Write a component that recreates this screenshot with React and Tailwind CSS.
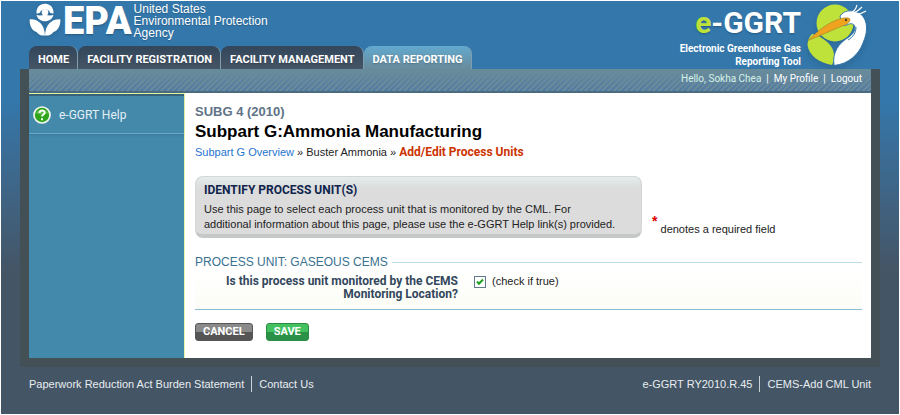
function EpaFlower() {
  return (
    <svg width="32" height="34" viewBox="0 0 32 34" aria-hidden="true" className="shrink-0 drop-shadow-sm">
      <path d="M7.500 10.500C7 4.500 11 .8 16 .8s9 3.700 8.500 9.700c-1.500 0-2.500-.2-3.500-.7-.8-4.700-9.200-4.700-10 0-1 .5-2 .7-3.500.7z" fill="#fff" />
      <circle cx="16" cy="9.300" r="3.300" fill="#fff" />
      <path d="M7.500 12c3 .8 5.500.3 8.500-.3 3 .6 5.500 1.100 8.500.3-1 3.800-4.200 6.300-8.500 6.300S8.500 15.800 7.500 12z" fill="#fff" />
      <path d="M.7 16.200c8.600-.6 15 5.300 15.300 16.300-3.500.5-6-.5-8.500-3.500C2.500 27.500.2 21.500.7 16.200z" fill="#fff" />
      <path d="M31.300 16.200C22.700 15.600 16.300 21.500 16 32.500c3.500.5 6-.5 8.500-3.500 5-1.500 7.300-7.500 6.800-12.800z" fill="#fff" />
      <path d="M9 17.300c4 2 6 5 7 9.500 1-4.500 3-7.500 7-9.500" fill="none" stroke="#3377ab" strokeWidth="1.200" />
    </svg>
  );
}

function HeronLogo() {
  return (
    <svg width="64" height="66" viewBox="0 0 64 66" aria-hidden="true" className="shrink-0 drop-shadow-md">
      <circle cx="30" cy="22" r="18.500" fill="#bfe23b" />
      <path d="M7 33c6 1 13 5 18 11 5 6 5 14 2 20C15 62 4 55 2.500 44c0-4 1.500-8 4.500-11z" fill="#bfe23b" />
      <path d="M29 64.500C27 51 34 42 44 36c4-3 6-6 6-10-1-4-5-4-8-2-3 1-6 0-6-4l-1-5c4-6 11-6 17-4 6 2 10 9 9.500 17 0 5-1.500 9-3.500 14-4 11-14 21-29 22.500z" fill="#fff" stroke="#3377ab" strokeWidth="1" />
      <path d="M51 26c0 6-3 10-8 13" fill="none" stroke="#3377ab" strokeWidth="1" />
      <path d="M3 39.500C13 30 23 21 36 17.500c4-1 8-1 9 .5 0 4-4 6-9 7.500-11 4.500-22 10-33 14z" fill="#efa31f" stroke="#96852d" strokeWidth=".6" />
      <circle cx="41" cy="19" r="1.200" fill="#4d4025" />
      <path d="M45 12c4-1 6-4 7-8M48 12c4-1 7-4 9-6M51 13c4 0 7-1 10-3" fill="none" stroke="#fff" strokeWidth="1.100" />
    </svg>
  );
}

function HelpIcon() {
  return (
    <svg width="18" height="18" viewBox="0 0 18 18" aria-hidden="true">
      <circle cx="9" cy="9" r="8" fill="#2ea51a" stroke="#f1f7ec" strokeWidth="1.700" />
      <path d="M3 7c1-4 11-4 12 0-3 2-9 2-12 0z" fill="#7bcf65" opacity=".6" />
      <path d="M6.500 7c0-3.400 5.200-3.200 5.200-.3C11.700 8.600 9 8.500 9 10.600M9 12.300v1.900" fill="none" stroke="#fff" strokeWidth="1.900" />
    </svg>
  );
}

const tabs = ["HOME", "FACILITY REGISTRATION", "FACILITY MANAGEMENT", "DATA REPORTING"];

function Header() {
  return (
    <header className="flex h-[68px] justify-between pr-[30px] pl-7">
      <div className="flex flex-col justify-between">
        <div className="flex gap-[2px] pt-[2px] text-white">
          <EpaFlower />
          <div className="font-[Roboto,sans-serif] text-[38px] leading-9 font-black text-shadow-sm">EPA</div>
          <p className="text-xs leading-3 text-shadow-xs">
            United States<br />Environmental Protection<br />Agency
          </p>
        </div>
        <nav className="flex font-[Roboto,sans-serif]">
          {tabs.map((tab) => (
            <a
              key={tab}
              href="#"
              className={`h-[23px] rounded-t-lg border-r border-[#7f9fb0] pr-2 pl-[9px] text-[11px] leading-[27px] font-bold whitespace-nowrap text-white text-shadow-sm ${
                tab === "DATA REPORTING"
                  ? "bg-linear-to-b from-[#62a9cf] to-[#688b9c]"
                  : "bg-linear-to-b from-[#33465a] to-[#455566]"
              }`}
            >
              {tab}
            </a>
          ))}
        </nav>
      </div>
      <div className="flex gap-1">
        <div className="text-right font-[Roboto,sans-serif] font-bold whitespace-nowrap text-white">
          <div className="pt-[2px] text-[30px] leading-[39px] text-shadow-sm">
            <span className="text-[#bfe23b]">e</span>-GGRT
          </div>
          <p className="text-[10px] leading-[13px]">
            Electronic Greenhouse Gas<br />Reporting Tool
          </p>
        </div>
        <HeronLogo />
      </div>
    </header>
  );
}

function Sidebar() {
  return (
    <aside className="w-[156px] shrink-0 border-t border-r border-[#e3f7a6] bg-[#4389ab]">
      <a
        href="#"
        className="flex h-10 items-center gap-2 border-t-2 border-b border-t-[#38617a] border-b-[#69a9ca] bg-[#4488aa] pl-1 font-[Roboto,sans-serif] text-xs text-[#e3f0f5] shadow-sm"
      >
        <HelpIcon />
        e-GGRT Help
      </a>
    </aside>
  );
}

function Main() {
  return (
    <main className="min-w-0 flex-1 bg-white pt-[11px] pr-[9px] pb-[17px] pl-[10px] text-[11px]">
      <p className="text-[13px] leading-4 font-bold text-[#607387]">SUBG 4 (2010)</p>
      <h1 className="text-[17px] leading-6 font-bold text-black">Subpart G:Ammonia Manufacturing</h1>
      <p className="leading-4">
        <a href="#" className="text-[#1f74cf]">Subpart G Overview</a> » Buster Ammonia »{" "}
        <strong className="font-[Roboto,sans-serif] text-xs leading-4 text-[#cc3300]">Add/Edit Process Units</strong>
      </p>
      <div className="mt-4 flex items-end gap-[10px]">
        <section className="w-[447px] rounded-lg border border-[#d3d7d7] border-b-4 border-b-[#c6c7c7] bg-linear-to-b from-[#e4eceb] to-[#dcdcdc] to-20% px-2 pt-[6px] pb-[2px] leading-[15px]">
          <h2 className="mb-1 font-[Roboto,sans-serif] text-xs leading-[15px] font-bold text-[#0f254c]">IDENTIFY PROCESS UNIT(S)</h2>
          <p>
            Use this page to select each process unit that is monitored by the CML. For<br />
            additional information about this page, please use the e-GGRT Help link(s) provided.
          </p>
        </section>
        <p className="leading-3">
          <sup className="text-sm font-bold text-[#dd0000]">*</sup> denotes a required field
        </p>
      </div>
      <fieldset className="mt-4">
        <legend className="flex w-full items-center gap-1 text-xs leading-4 text-[#39718f]">
          PROCESS UNIT: GASEOUS CEMS
          <span className="h-px flex-1 bg-[#bcdcec]" />
        </legend>
        <div className="flex h-10 items-start gap-4 border-b border-[#8cbcd6] bg-linear-to-b from-white to-[#fcfdf6] pt-[5px]">
          <label htmlFor="monitored" className="w-[263px] text-right font-[Roboto,sans-serif] text-xs leading-[13px] font-bold text-[#33475c]">
            Is this process unit monitored by the CEMS<br />Monitoring Location?
          </label>
          <label className="flex items-center gap-[6px] leading-[13px]">
            <span className="relative flex">
              <input
                id="monitored"
                type="checkbox"
                defaultChecked
                className="peer size-3 appearance-none border border-[#60798c] bg-white"
              />
              <svg viewBox="0 0 12 12" className="pointer-events-none absolute inset-0 hidden size-3 peer-checked:block" aria-hidden="true">
                <path d="M3 5.500l2 2.300 4-4.300" fill="none" stroke="#21a121" strokeWidth="2" />
              </svg>
            </span>
            (check if true)
          </label>
        </div>
      </fieldset>
      <div className="mt-[13px] flex gap-[13px] font-[Roboto,sans-serif] leading-4 font-bold text-white">
        <button className="h-[18px] rounded-[3px] border border-[#555] bg-linear-to-b from-[#8a8a8a] from-50% to-[#555] to-50% px-[7px]">CANCEL</button>
        <button className="h-[18px] rounded-[3px] border border-[#2c8b43] bg-linear-to-b from-[#43c161] from-50% to-[#299247] to-50% px-[7px]">SAVE</button>
      </div>
    </main>
  );
}

export default function App() {
  return (
    <div className="min-h-screen border border-white bg-[#445566] bg-linear-to-b from-[#3377ab] from-[100px] to-[#445566] to-[270px] font-['Liberation_Sans',Arial,sans-serif] text-[#222]">
      <Header />
      <div className="mx-[19px] border-x-[9px] border-b-[9px] border-[#435157]">
        <div className="flex h-6 justify-end gap-[5px] border-b-2 border-[#4a6c80] bg-[#688b9c] bg-[linear-gradient(#688b9c_10%,transparent),repeating-linear-gradient(135deg,transparent_0_2px,#5279a3_2px_4px)] pr-[9px] font-[Roboto,sans-serif] text-[10px] leading-5 text-white">
          <span className="text-[#d5f2e6]">Hello, Sokha Chea</span>
          <span>|</span>
          <a href="#">My Profile</a>
          <span>|</span>
          <a href="#">Logout</a>
        </div>
        <div className="flex">
          <Sidebar />
          <Main />
        </div>
      </div>
      <footer className="flex justify-between px-7 pt-[9px] text-[11px] leading-4 text-[#e8edf0]">
        <div className="flex gap-[7px]">
          <a href="#">Paperwork Reduction Act Burden Statement</a>
          <a href="#" className="border-l border-[#ccd3d8] pl-[7px]">Contact Us</a>
        </div>
        <div className="flex gap-[7px]">
          <span>e-GGRT RY2010.R.45</span>
          <span className="border-l border-[#ccd3d8] pl-[7px]">CEMS-Add CML Unit</span>
        </div>
      </footer>
    </div>
  );
}
